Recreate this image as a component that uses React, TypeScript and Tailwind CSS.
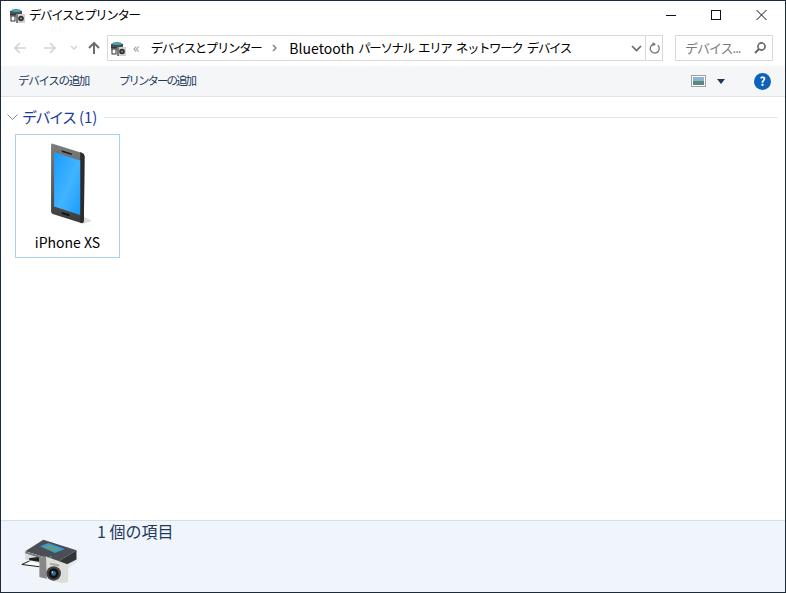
import React from "react";

const font = { fontFamily: '"Noto Sans CJK JP", "Noto Sans", sans-serif' };

function SmallIcon() {
  return (
    <svg width="16" height="15" viewBox="0 0 16 15" className="shrink-0">
      <polygon points="1,3 7,1 13,3 13,6 1,6" fill="#4b4f52" />
      <rect x="3" y="1.5" width="8" height="2.5" fill="#2c9bc9" />
      <rect x="5" y="2" width="4" height="1.5" fill="#49b56f" />
      <rect x="1" y="6" width="12" height="4" fill="#c4c6c8" />
      <rect x="1" y="6" width="12" height="1.5" fill="#34373a" />
      <rect x="2" y="8" width="4" height="5" fill="#fff" stroke="#333" strokeWidth="1" />
      <rect x="7" y="6" width="9" height="9" fill="#d2d2ce" />
      <rect x="7" y="6" width="2" height="9" fill="#7d7d7b" />
      <circle cx="12" cy="10.5" r="2.8" fill="#2f3134" />
      <circle cx="12" cy="10.5" r="1" fill="#6ea0c0" />
    </svg>
  );
}

function PrinterCamera() {
  return (
    <svg width="60" height="48" viewBox="60 85 180 145" className="shrink-0">
      <polygon points="175,170 240,150 205,178" fill="#e4e7ee" />
      <polygon points="65,165 112,143 135,150 120,172" fill="#fff" stroke="#1c1c1c" strokeWidth="3" />
      <polygon points="75,125 130,90 230,122 175,156" fill="#4b4e52" />
      <polygon points="75,125 175,156 175,178 75,150" fill="#d8dadc" />
      <polygon points="86,146 118,142 150,162 88,152" fill="#1f2123" />
      <polygon points="75,125 175,156 175,163 75,131" fill="#77797c" />
      <polygon points="175,156 230,122 230,150 190,170" fill="#333538" />
      <polygon points="120,110 145,100 195,118 165,130" fill="#2f9ae0" />
      <polygon points="128,113 146,106 182,118 164,125" fill="#6b9a78" />
      <circle cx="152" cy="142" r="2.5" fill="#35d05a" />
      <polygon points="118,145 138,141 205,165 205,218 188,222 118,203" fill="#dcdcd8" />
      <polygon points="118,145 138,141 140,208 118,203" fill="#87878a" />
      <polygon points="150,160 178,165 178,172 150,166" fill="#a9a9a4" />
      <circle cx="161" cy="192" r="22" fill="#3f4144" />
      <circle cx="161" cy="192" r="15" fill="#121212" />
      <circle cx="161" cy="192" r="7" fill="#2f6f98" />
      <circle cx="157" cy="188" r="2.5" fill="#cfe6f5" />
    </svg>
  );
}

function Phone() {
  return (
    <svg width="42" height="82" viewBox="150 130 125 245" className="shrink-0">
      <defs>
        <linearGradient id="scr" x1="0" y1="0" x2="1" y2="1">
          <stop offset="0" stopColor="#1a9bff" />
          <stop offset="0.55" stopColor="#42b4ff" />
          <stop offset="1" stopColor="#1a9bfc" />
        </linearGradient>
        <linearGradient id="body" x1="0" y1="0" x2="0" y2="1">
          <stop offset="0" stopColor="#7d7d7d" />
          <stop offset="0.5" stopColor="#5e5e5e" />
          <stop offset="1" stopColor="#3b3b3b" />
        </linearGradient>
      </defs>
      <polygon points="240,345 275,362 250,372 240,370" fill="#dcdcdc" />
      <path d="M158 132 L246 160 Q253 163 253 170 L251 362 Q250 371 243 369 L158 342 Q153 340 153 334 L153 137 Q153 131 158 132 Z" fill="url(#body)" />
      <path d="M240 157 L246 160 Q253 163 253 170 L251 362 Q250 371 243 369 L240 368 Z" fill="#2b2b2b" />
      <polygon points="162,158 240,182 240,345 162,320" fill="url(#scr)" />
      <polygon points="185,152 215,161 215,166 185,157" fill="#1b1b1b" />
      <polygon points="185,336 208,343 208,349 185,342" fill="#111" />
    </svg>
  );
}

export default function App() {
  return (
    <div style={font} className="w-[786px] h-[593px] flex flex-col bg-white border border-[#1c2b3a] overflow-hidden text-black">
      {/* title bar */}
      <div className="h-[29px] flex items-center shrink-0">
        <div className="ml-[8px] mr-[4px] flex"><SmallIcon /></div>
        <span className="text-[12.5px] tracking-[-1.4px] leading-none -mt-[1px]">デバイスとプリンター</span>
        <div className="ml-auto flex items-center">
          <svg width="46" height="29" viewBox="0 0 46 29"><rect x="20" y="14" width="10" height="1" fill="#111" /></svg>
          <svg width="46" height="29" viewBox="0 0 46 29"><rect x="19.5" y="9.5" width="9" height="9" fill="none" stroke="#111" /></svg>
          <svg width="46" height="29" viewBox="0 0 46 29" className="mr-[1px]"><path d="M18.5 9 L28.5 19 M28.5 9 L18.5 19" stroke="#111" strokeWidth="1" fill="none" /></svg>
        </div>
      </div>

      {/* nav bar */}
      <div className="h-[36px] flex items-center shrink-0">
        <div className="w-[106px] flex items-center shrink-0">
          <svg width="106" height="36" viewBox="0 0 106 36">
            <path d="M14 18 H25 M19 13 L14 18 L19 23" stroke="#d4d4d4" strokeWidth="1.6" fill="none" />
            <path d="M43 18 H54 M49 13 L54 18 L49 23" stroke="#d4d4d4" strokeWidth="1.6" fill="none" />
            <path d="M70 16 L73 19 L76 16" stroke="#d4d4d4" strokeWidth="1.4" fill="none" />
            <path d="M93 24 V13 M88 18 L93 13 L98 18" stroke="#6d6d6d" strokeWidth="2" fill="none" />
          </svg>
        </div>
        <div className="w-[556px] h-[26px] border border-[#d9d9d9] flex items-center shrink-0 text-[12.5px]">
          <div className="ml-[2px] flex"><SmallIcon /></div>
          <span className="ml-[7px] text-[#8a8a8a] text-[14px] leading-none -mt-[2px]">«</span>
          <span className="ml-[11px] whitespace-nowrap tracking-[-1.4px]">デバイスとプリンター</span>
          <svg width="6" height="8" viewBox="0 0 6 8" className="ml-[11px]"><path d="M1 1 L4 4 L1 7" stroke="#777" strokeWidth="1.3" fill="none" /></svg>
          <span className="ml-[11px] whitespace-nowrap text-[14px]">Bluetooth</span>
          <span className="ml-[4px] whitespace-nowrap tracking-[-1.4px] [word-spacing:3px]">パーソナル エリア ネットワーク デバイス</span>
          <div className="ml-auto flex items-center h-full">
            <svg width="16" height="24" viewBox="0 0 16 24"><path d="M3 10 L7.5 14.5 L12 10" stroke="#666" strokeWidth="1.6" fill="none" /></svg>
            <div className="w-[17px] h-full border-l border-[#d9d9d9] flex items-center justify-center">
              <svg width="13" height="13" viewBox="0 0 13 13"><path d="M9.8 3.2 A4.5 4.5 0 1 1 5.5 2.2" stroke="#777" strokeWidth="1.3" fill="none" /><path d="M4.5 0 L8 2.2 L4.5 4.5 Z" fill="#777" /></svg>
            </div>
          </div>
        </div>
        <div className="ml-[12px] w-[98px] h-[26px] border border-[#d9d9d9] flex items-center pl-[9px] shrink-0 text-[13px] tracking-[-1px] text-[#7a7a7a]">
          <span className="whitespace-nowrap">デバイス...</span>
          <svg width="14" height="14" viewBox="0 0 14 14" className="ml-auto mr-[5px]"><circle cx="8.5" cy="5.5" r="3.6" stroke="#666" strokeWidth="1.6" fill="none" /><path d="M6 8 L2 12" stroke="#666" strokeWidth="2" /></svg>
        </div>
      </div>

      {/* toolbar */}
      <div className="h-[31px] bg-[#f5f6f7] border-b border-[#e3e3e3] flex items-center shrink-0 text-[11.5px] text-[#1e395b]">
        <span className="ml-[17px] tracking-[-1.3px]">デバイスの追加</span>
        <span className="ml-[30px] tracking-[-2px]">プリンターの追加</span>
        <div className="ml-auto flex items-center mr-[14px]">
          <svg width="15" height="12" viewBox="0 0 15 12"><rect x="0.5" y="0.5" width="14" height="11" fill="#fff" stroke="#a0a0a0" /><rect x="2" y="2" width="11" height="4" fill="#8db4d8" /><rect x="2" y="6" width="11" height="4" fill="#5b8a7a" /></svg>
          <svg width="8" height="5" viewBox="0 0 8 5" className="ml-[11px]"><path d="M0 0 H8 L4 5 Z" fill="#1e395b" /></svg>
          <div className="ml-[29px] w-[17px] h-[17px] rounded-full bg-[#0c63b8] flex items-center justify-center text-white text-[12px] font-bold leading-none">?</div>
        </div>
      </div>

      {/* content */}
      <div className="flex-1 min-h-0 flex flex-col">
        <div className="h-[20px] mt-[10px] flex items-center shrink-0">
          <svg width="11" height="7" viewBox="0 0 11 7" className="ml-[6px]"><path d="M0.5 0.5 L5.5 5.5 L10.5 0.5" stroke="#8a8a8a" fill="none" /></svg>
          <span className="ml-[4px] text-[15px] text-[#1e3a9e] leading-none -mt-[2px]"><span className="tracking-[-1.5px]">デバイス</span> (1)</span>
          <div className="ml-[7px] mr-[7px] flex-1 h-px bg-[#e3e6ea]" />
        </div>
        <div className="ml-[14px] mt-[7px] w-[105px] h-[124px] border border-[#a5d4f0] flex flex-col items-center">
          <div className="mt-[8px] ml-[34px] self-start flex"><Phone /></div>
          <span className="mt-[10px] text-[14px] leading-none whitespace-nowrap">iPhone XS</span>
        </div>
      </div>

      {/* status */}
      <div className="h-[72px] shrink-0 bg-[#f0f4fb] border-t border-[#d3dfee] flex">
        <div className="ml-[19px] mt-[17px] flex self-start"><PrinterCamera /></div>
        <span className="ml-[17px] text-[16px] text-[#1e395b] leading-[20px] h-[20px] whitespace-pre">1 個の項目</span>
      </div>
    </div>
  );
}
